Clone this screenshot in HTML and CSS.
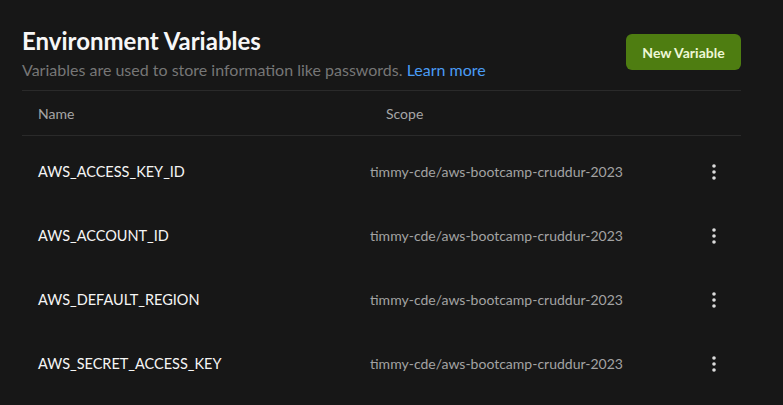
FILE: index.html
```html
<!DOCTYPE html>
<html>
<head>
<meta charset="utf-8">
<link rel="stylesheet" href="styles.css">
</head>
<body>
<main class="page">
  <header class="top">
    <div class="intro">
      <h1 class="title">Environment Variables</h1>
      <p class="subtitle">Variables are used to store information like passwords. <a class="link" href="#">Learn more</a></p>
    </div>
    <button class="btn">New Variable</button>
  </header>
  <section class="table">
    <div class="thead">
      <span class="th">Name</span>
      <span class="th th-scope">Scope</span>
      <span></span>
    </div>
    <div class="tbody">
      <div class="row">
        <span class="name">AWS_ACCESS_KEY_ID</span>
        <span class="scope">timmy-cde/aws-bootcamp-cruddur-2023</span>
        <span class="more"><svg width="4" height="16" viewBox="0 0 4 16"><circle cx="2" cy="2" r="1.8"/><circle cx="2" cy="8" r="1.8"/><circle cx="2" cy="14" r="1.8"/></svg></span>
      </div>
      <div class="row">
        <span class="name">AWS_ACCOUNT_ID</span>
        <span class="scope">timmy-cde/aws-bootcamp-cruddur-2023</span>
        <span class="more"><svg width="4" height="16" viewBox="0 0 4 16"><circle cx="2" cy="2" r="1.8"/><circle cx="2" cy="8" r="1.8"/><circle cx="2" cy="14" r="1.8"/></svg></span>
      </div>
      <div class="row">
        <span class="name">AWS_DEFAULT_REGION</span>
        <span class="scope">timmy-cde/aws-bootcamp-cruddur-2023</span>
        <span class="more"><svg width="4" height="16" viewBox="0 0 4 16"><circle cx="2" cy="2" r="1.8"/><circle cx="2" cy="8" r="1.8"/><circle cx="2" cy="14" r="1.8"/></svg></span>
      </div>
      <div class="row">
        <span class="name">AWS_SECRET_ACCESS_KEY</span>
        <span class="scope">timmy-cde/aws-bootcamp-cruddur-2023</span>
        <span class="more"><svg width="4" height="16" viewBox="0 0 4 16"><circle cx="2" cy="2" r="1.8"/><circle cx="2" cy="8" r="1.8"/><circle cx="2" cy="14" r="1.8"/></svg></span>
      </div>
    </div>
  </section>
</main>
</body>
</html>
```
FILE: styles.css
```css
html, body {
  margin: 0;
  padding: 0;
  background: #171717;
  height: 100%;
  overflow: hidden;
}
body {
  font-family: Lato, "Open Sans", sans-serif;
  color: #f2f2f2;
}
.page {
  width: 719px;
  margin-left: 22px;
  padding-top: 26px;
}
.top {
  display: flex;
  justify-content: space-between;
  align-items: center;
  padding-bottom: 10px;
  border-bottom: 1px solid #2a2a2a;
}
.title {
  margin: 0;
  font-size: 24px;
  line-height: 29px;
  font-weight: 700;
  color: #f7f7f7;
}
.subtitle {
  margin: 5px 0 0;
  font-size: 16px;
  line-height: 20px;
  color: #767676;
}
.link {
  color: #4a9cf5;
  text-decoration: none;
}
.btn {
  width: 115px;
  height: 36px;
  margin-top: -2px;
  border: 0;
  border-radius: 6px;
  background: #4e7d11;
  color: #eef8d6;
  font-family: Lato, sans-serif;
  font-weight: 700;
  font-size: 14px;
  padding: 0;
}
.thead, .row {
  display: grid;
  grid-template-columns: 332px 1fr 24px;
  align-items: center;
  padding: 0 15px 0 16px;
}
.thead {
  height: 44px;
  border-bottom: 1px solid #2a2a2a;
}
.th {
  font-size: 14px;
  line-height: 17px;
  color: #a6a6a6;
}
.th-scope {
  padding-left: 16px;
}
.tbody {
  padding-top: 4px;
}
.row {
  height: 64px;
}
.name {
  font-size: 14.5px;
  line-height: 18px;
  color: #f5f5f5;
}
.scope {
  font-size: 14px;
  line-height: 18px;
  color: #a3a3a3;
}
.more {
  display: flex;
  justify-content: center;
  align-items: center;
}
.more svg {
  fill: #dcdcdc;
  display: block;
}
```
